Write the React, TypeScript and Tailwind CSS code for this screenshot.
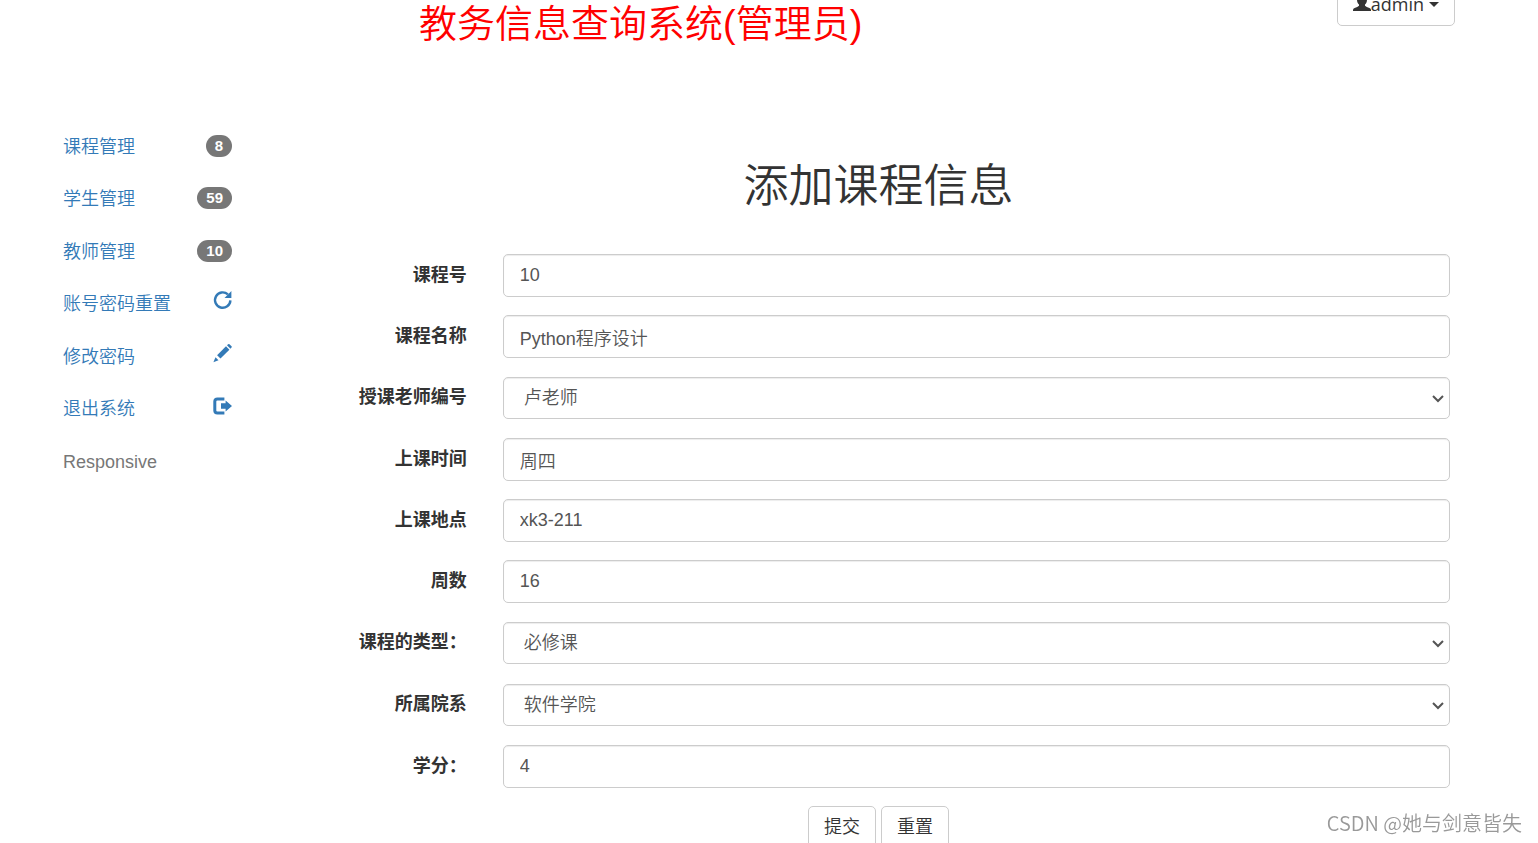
import type { ReactNode } from 'react';

type Field = {
  id: string;
  label: string;
  value: string;
  select?: boolean;
};

const fields: Field[] = [
  { id: 'cno', label: '课程号', value: '10' },
  { id: 'cname', label: '课程名称', value: 'Python程序设计' },
  { id: 'teacher', label: '授课老师编号', value: '卢老师', select: true },
  { id: 'time', label: '上课时间', value: '周四' },
  { id: 'place', label: '上课地点', value: 'xk3-211' },
  { id: 'weeks', label: '周数', value: '16' },
  { id: 'type', label: '课程的类型：', value: '必修课', select: true },
  { id: 'dept', label: '所属院系', value: '软件学院', select: true },
  { id: 'credit', label: '学分：', value: '4' },
];

function RepeatIcon() {
  return (
    <svg className="mb-2 size-5" viewBox="0 0 20 20" aria-hidden="true">
      <path d="M15.9 4.4A7.7 7.7 0 1 0 18.4 10.4" fill="none" stroke="currentColor" strokeWidth="2.4" />
      <path d="M19.4 1V7.9H12.5Z" fill="currentColor" />
    </svg>
  );
}

function PencilIcon() {
  return (
    <svg className="mb-2 size-5" viewBox="0 0 20 20" fill="currentColor" aria-hidden="true">
      <path d="M16.1 1.2Q16.8 .6 17.5 1.2L19.5 3.2Q20.1 3.9 19.5 4.6L18.4 5.7L15 2.3Z" />
      <path d="M14 3.3L17.4 6.7L8.5 15.6L5.1 12.2Z" />
      <path d="M3.5 14.2L6.5 17.2L1.4 19.2Z" />
    </svg>
  );
}

function LogoutIcon() {
  return (
    <svg className="mb-1.5 size-5" viewBox="0 0 20 20" aria-hidden="true">
      <path d="M12.4 2.9H5.4Q2.8 2.9 2.8 5.5V14.5Q2.8 17.1 5.4 17.1H12.4" fill="none" stroke="currentColor" strokeWidth="3" />
      <path d="M13.6 4.6L20 10L13.6 15.4V12.8H9V7.2H13.6Z" fill="currentColor" />
    </svg>
  );
}

function UserIcon() {
  return (
    <svg className="h-[18px] w-[18px]" viewBox="0 0 18 18" fill="currentColor" aria-hidden="true">
      <path d="M9 0C12 0 14 1.8 14 4.6C14 6.8 13.2 8.6 12 9.6V10.8Q13.4 12 16.4 13Q18 13.7 18 15V16H0V15Q0 13.7 1.6 13Q4.6 12 6 10.8V9.6C4.8 8.6 4 6.8 4 4.6C4 1.8 6 0 9 0Z" />
    </svg>
  );
}

function Badge({ children }: { children: ReactNode }) {
  return (
    <span className="mb-0.5 rounded-full bg-[#777] px-[9px] text-[15px] leading-[22px] font-bold text-white">{children}</span>
  );
}

function Sidebar() {
  return (
    <nav className="w-[169px] shrink-0 text-[#337ab7]">
      <a href="#course" className="flex h-[52px] items-center justify-between">课程管理<Badge>8</Badge></a>
      <a href="#student" className="flex h-[52px] items-center justify-between">学生管理<Badge>59</Badge></a>
      <a href="#teacher" className="flex h-[53px] items-center justify-between">教师管理<Badge>10</Badge></a>
      <a href="#reset" className="flex h-[52px] items-center justify-between">账号密码重置<RepeatIcon /></a>
      <a href="#password" className="flex h-[53px] items-center justify-between">修改密码<PencilIcon /></a>
      <a href="#logout" className="flex h-[52px] items-center justify-between">退出系统<LogoutIcon /></a>
      <a href="#responsive" className="flex h-[53px] items-center text-[#777]">Responsive</a>
    </nav>
  );
}

function FormRow({ field }: { field: Field }) {
  const box = 'block w-full rounded-[5px] border border-[#ccc] bg-white text-[#555] shadow-[inset_0_1px_1px_rgba(0,0,0,0.075)]';
  return (
    <div className={field.select ? 'mb-[19px] grid grid-cols-6' : 'mb-[18px] grid grid-cols-6'}>
      <label htmlFor={field.id} className="pt-2 pr-[18px] text-right font-bold whitespace-nowrap">{field.label}</label>
      <div className="relative col-span-5 pr-[19px] pl-[18px]">
        {field.select ? (
          <>
            <select id={field.id} defaultValue={field.value} className={`${box} mt-px h-[42px] appearance-none px-5`}>
              <option>{field.value}</option>
            </select>
            <svg className="pointer-events-none absolute top-[19px] right-[25px] h-2 w-3" viewBox="0 0 12 8" aria-hidden="true">
              <path d="M1 1L6 6L11 1" fill="none" stroke="#555" strokeWidth="2" />
            </svg>
          </>
        ) : (
          <input id={field.id} type="text" defaultValue={field.value} className={`${box} h-[43px] px-4`} />
        )}
      </div>
    </div>
  );
}

export default function App() {
  return (
    <div className="bg-white font-['Liberation_Sans','Noto_Sans_CJK_SC',sans-serif] text-[18px] leading-[26px] font-[350] text-[#333]">
      <header className="flex items-start justify-between pr-[83px] pl-[419px]">
        <h1 className="text-[38px] leading-[48px] text-[#f00]">教务信息查询系统(管理员)</h1>
        <button type="button" className="-mt-[18px] flex h-11 items-center rounded-[5px] border border-[#ccc] px-[15px] font-['Open_Sans',sans-serif] text-[18px] font-normal">
          <UserIcon />
          admin
          <span className="ml-[5px] border-x-[5px] border-t-[5px] border-x-transparent border-t-[#333]" />
        </button>
      </header>
      <div className="flex pt-[73px] pr-[69px] pl-[63px]">
        <Sidebar />
        <main className="ml-14 flex-1 pt-9">
          <h2 className="mb-[37px] text-center text-[45px] leading-[60px]">添加课程信息</h2>
          <form>
            {fields.map((field) => (
              <FormRow key={field.id} field={field} />
            ))}
            <div className="flex justify-center gap-[5px]">
              <button type="submit" className="h-[42px] rounded-[5px] border border-[#ccc] px-[15px]">提交</button>
              <button type="reset" className="h-[42px] rounded-[5px] border border-[#ccc] px-[15px]">重置</button>
            </div>
          </form>
        </main>
      </div>
      <div className="pointer-events-none fixed right-4 bottom-2 font-['Noto_Sans_CJK_SC',sans-serif] text-[20px] leading-6 text-[#999]">CSDN @她与剑意皆失</div>
    </div>
  );
}
